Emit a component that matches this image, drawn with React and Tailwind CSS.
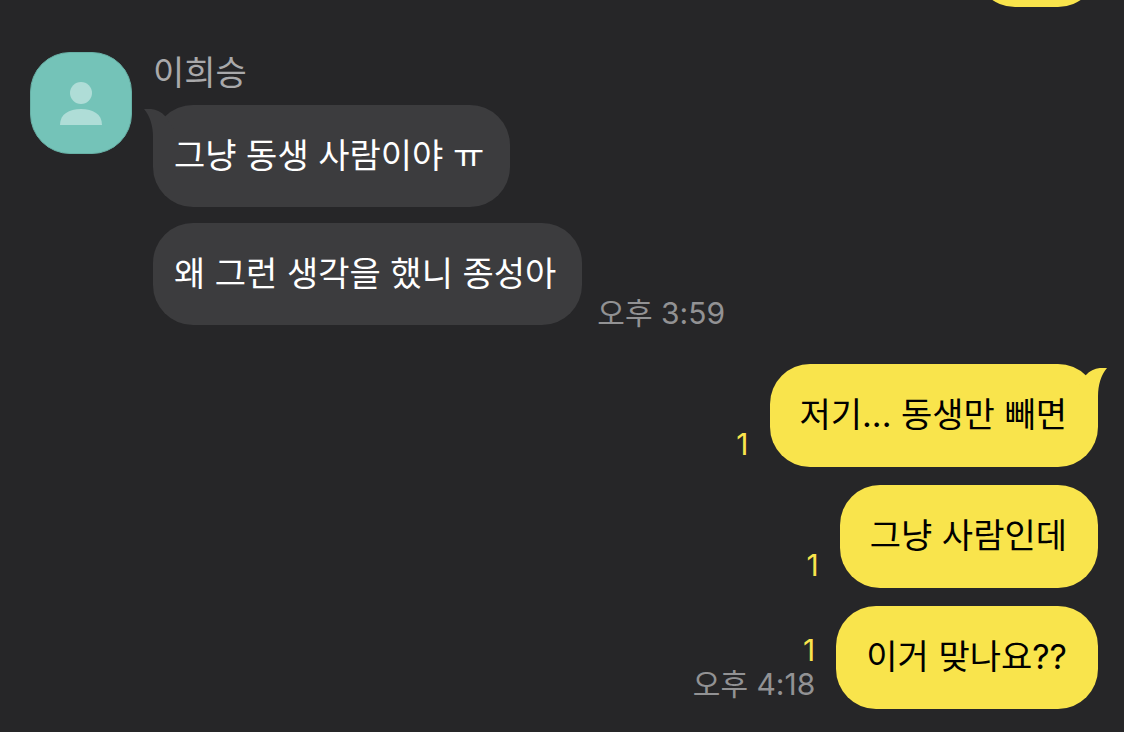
import clsx from "clsx";

const received = [
  { id: 1, text: "그냥 동생 사람이야 ㅠ" },
  { id: 2, text: "왜 그런 생각을 했니 종성아", time: "오후 3:59" },
];

const sent = [
  { id: 3, text: "저기... 동생만 빼면", unread: 1 },
  { id: 4, text: "그냥 사람인데", unread: 1 },
  { id: 5, text: "이거 맞나요??", unread: 1, time: "오후 4:18" },
];

const Avatar = () => (
  <div className="flex size-[102px] shrink-0 items-center justify-center rounded-[40px] border border-[#68b0a6] bg-[#74c3b8]">
    <svg viewBox="0 0 44 44" className="size-11" aria-hidden="true">
      <circle cx="22" cy="12" r="11" fill="#afddd7" />
      <path d="M1 44C1 33 10 28 22 28s21 5 21 16z" fill="#afddd7" />
    </svg>
  </div>
);

// Little horn on the first bubble of a group
const Tail = ({ mine }) => (
  <svg
    viewBox="0 0 30 40"
    aria-hidden="true"
    className={clsx(
      "absolute top-1 h-10 w-[30px]",
      mine ? "-right-[9px] fill-[#f9e44c]" : "-left-[9px] -scale-x-100 fill-[#3c3c3e]"
    )}
  >
    <path d="M30 0C23 -1 14 1 9 7L0 20L21 40V28C21 17 24 7 30 0z" />
  </svg>
);

const Bubble = ({ children, mine, tail }) => (
  <p
    className={clsx(
      "relative rounded-[40px] text-[34px] leading-[50px]",
      mine
        ? "bg-[#f9e44c] pt-[26px] pr-[31px] pb-[27px] pl-[30px] text-black"
        : "bg-[#3c3c3e] py-[26px] pr-[26px] pl-[21px] text-white"
    )}
  >
    {tail && <Tail mine={mine} />}
    <span className="relative">{children}</span>
  </p>
);

export default function App() {
  return (
    <main className="flex min-h-screen flex-col overflow-hidden bg-[#262628] font-['Inter','Noto_Sans_CJK_KR',sans-serif]">
      {/* end of the previous message, scrolled out of view */}
      <div className="flex h-[7px] items-end justify-end overflow-hidden pr-[26px]">
        <div className="h-[103px] w-[123px] shrink-0 rounded-[40px] bg-[#f9e44c]" />
      </div>

      <section className="mt-[45px] flex items-start gap-[21px] pl-[30px]">
        <Avatar />
        <div>
          <h2 className="text-[34px] leading-[42px] text-[#a9a9ab]">이희승</h2>
          <ul className="mt-[11px] flex flex-col gap-4">
            {received.map((msg, i) => (
              <li key={msg.id} className="flex items-end gap-[15px]">
                <Bubble tail={i === 0}>{msg.text}</Bubble>
                {msg.time && <time className="text-[30px] leading-6 text-[#929294]">{msg.time}</time>}
              </li>
            ))}
          </ul>
        </div>
      </section>

      <ul className="mt-[39px] flex flex-col gap-[18px] pr-[26px]">
        {sent.map((msg, i) => (
          <li key={msg.id} className="flex items-end justify-end gap-[21px]">
            <div className="flex flex-col items-end pb-[7px]">
              <span className="text-[30px] leading-8 text-[#f9e44c]">{msg.unread}</span>
              {msg.time && <time className="text-[30px] leading-9 text-[#929294]">{msg.time}</time>}
            </div>
            <Bubble mine tail={i === 0}>{msg.text}</Bubble>
          </li>
        ))}
      </ul>
    </main>
  );
}
